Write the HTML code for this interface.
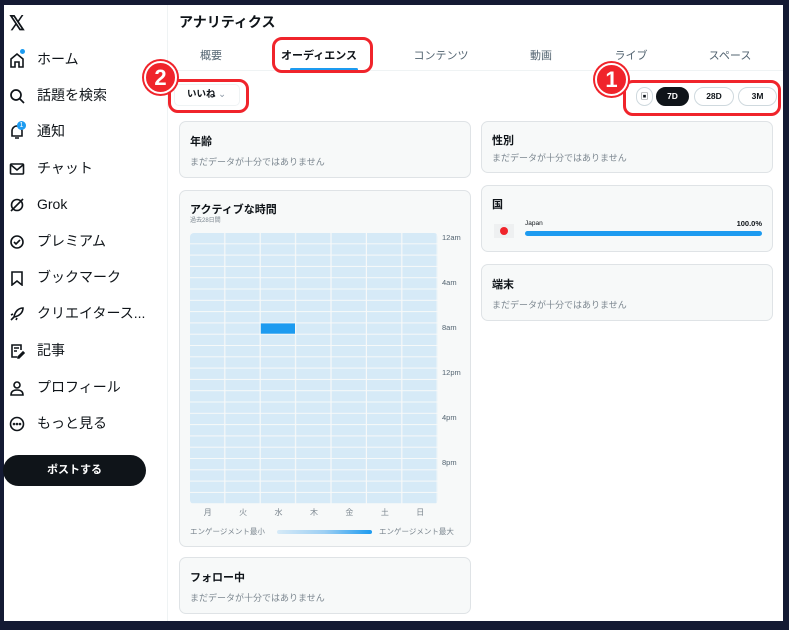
<!DOCTYPE html>
<html><head><meta charset="utf-8"><style>
*{box-sizing:border-box;margin:0;padding:0}
body{width:789px;height:630px;overflow:hidden;background:#141a33;font-family:"Liberation Sans","Noto Sans CJK JP",sans-serif;color:#0f1419;position:relative}
.panel{position:absolute;left:4px;top:5px;width:779px;height:616px;background:#fff}
.abs{position:absolute}
.side{position:absolute;left:0;top:0;width:164px;height:616px;border-right:1px solid #eff3f4}
.nav{position:absolute;left:33px;font-size:14px;line-height:20px;height:20px;color:#0f1419}
.ic{position:absolute;left:5px;width:16px;height:16px}
.tab{position:absolute;top:42px;font-size:11px;color:#536471;transform:translateX(-50%)}
.card{position:absolute;background:#f7f9f9;border:1px solid #dfe3e6;border-radius:7px}
.ct{position:absolute;left:10px;font-size:11px;font-weight:bold}
.cs{position:absolute;left:10px;font-size:9px;color:#7b868f}
.red{position:absolute;border:3px solid #f0242b;border-radius:10px}
.circ{position:absolute;width:33px;height:33px;border-radius:50%;background:#f0242b;border:2px solid #fff;box-shadow:0 0 0 2px #f0242b;color:#fff;font-weight:bold;font-size:22px;text-align:center;line-height:29px}
.pill{position:absolute;top:82px;height:19px;border:1px solid #cfd9de;border-radius:10px;font-size:8.5px;font-weight:bold;text-align:center;line-height:17px}
</style></head><body>
<div class="panel">
<div class="side">
<div class="abs" style="left:5px;top:6px;font-size:20px;font-weight:bold">𝕏</div>
<svg class="ic" style="top:47px" viewBox="0 0 16 16" fill="none" stroke="#0f1419" stroke-width="1.6"><path d="M2 7L8 2l6 5v8h-4v-5H6v5H2z"/></svg><div class="abs" style="left:16px;top:44px;width:5px;height:5px;border-radius:50%;background:#1d9bf0"></div>
<div class="nav" style="top:44px">ホーム</div>
<svg class="ic" style="top:83px" viewBox="0 0 16 16" fill="none" stroke="#0f1419" stroke-width="1.7"><circle cx="7" cy="7" r="5"/><path d="M11 11l4 4"/></svg>
<div class="nav" style="top:80px">話題を検索</div>
<svg class="ic" style="top:119px" viewBox="0 0 16 16" fill="none" stroke="#0f1419" stroke-width="1.6"><path d="M3 12V7a5 5 0 0110 0v5H3zM6 14h4"/></svg><div class="abs" style="left:13px;top:116px;width:9px;height:9px;border-radius:50%;background:#1d9bf0;color:#fff;font-size:7px;text-align:center;line-height:9px">1</div>
<div class="nav" style="top:116px">通知</div>
<svg class="ic" style="top:156px" viewBox="0 0 16 16" fill="none" stroke="#0f1419" stroke-width="1.6"><rect x="1.5" y="3" width="13" height="10" rx="1"/><path d="M2 4l6 5 6-5"/></svg>
<div class="nav" style="top:153px">チャット</div>
<svg class="ic" style="top:192px" viewBox="0 0 16 16" fill="none" stroke="#0f1419" stroke-width="1.6"><circle cx="8" cy="8" r="5.5"/><path d="M2 14L14 2"/></svg>
<div class="nav" style="top:189px">Grok</div>
<svg class="ic" style="top:229px" viewBox="0 0 16 16" fill="none" stroke="#0f1419" stroke-width="1.6"><circle cx="8" cy="8" r="6"/><path d="M5 8l2 2 4-4"/></svg>
<div class="nav" style="top:226px">プレミアム</div>
<svg class="ic" style="top:265px" viewBox="0 0 16 16" fill="none" stroke="#0f1419" stroke-width="1.6"><path d="M3 2h10v13l-5-4-5 4z"/></svg>
<div class="nav" style="top:262px">ブックマーク</div>
<svg class="ic" style="top:301px" viewBox="0 0 16 16" fill="none" stroke="#0f1419" stroke-width="1.6"><path d="M5 11c1-6 5-9 9-9 0 4-3 8-9 9zM5 11l-3 3M4 8L2 9M8 12l-1 2"/></svg>
<div class="nav" style="top:298px">クリエイタース...</div>
<svg class="ic" style="top:338px" viewBox="0 0 16 16" fill="none" stroke="#0f1419" stroke-width="1.6"><path d="M12 7V2H3v12h5M5 5h5M5 8h3M9 14l5-5 1 1-5 5H9z"/></svg>
<div class="nav" style="top:335px">記事</div>
<svg class="ic" style="top:375px" viewBox="0 0 16 16" fill="none" stroke="#0f1419" stroke-width="1.6"><circle cx="8" cy="5" r="3"/><path d="M2 15c0-4 3-5 6-5s6 1 6 5z"/></svg>
<div class="nav" style="top:372px">プロフィール</div>
<svg class="ic" style="top:411px" viewBox="0 0 16 16" fill="none" stroke="#0f1419" stroke-width="1.6"><circle cx="8" cy="8" r="6.5"/><circle cx="5" cy="8" r=".5"/><circle cx="8" cy="8" r=".5"/><circle cx="11" cy="8" r=".5"/></svg>
<div class="nav" style="top:408px">もっと見る</div>
<div class="abs" style="left:-1px;top:450px;width:143px;height:31px;border-radius:16px;background:#0f1419;color:#fff;font-size:11px;font-weight:bold;text-align:center;line-height:31px">ポストする</div>
</div>
<div class="abs" style="left:175px;top:7px;font-size:14px;font-weight:bold">アナリティクス</div>
<div class="tab" style="left:207px">概要</div>
<div class="tab" style="left:315px;color:#0f1419;font-weight:bold">オーディエンス</div>
<div class="abs" style="left:286px;top:63px;width:68px;height:3px;background:#1d9bf0;border-radius:2px"></div>
<div class="tab" style="left:437px">コンテンツ</div>
<div class="tab" style="left:537px">動画</div>
<div class="tab" style="left:627px">ライブ</div>
<div class="tab" style="left:726px">スペース</div>
<div class="abs" style="left:165px;top:65px;width:614px;height:1px;background:#eff3f4"></div>
<div class="red" style="left:268px;top:32px;width:101px;height:36px"></div>
<div class="abs" style="left:170px;top:79px;width:66px;height:22px;border:1px solid #eff3f4;border-radius:5px;font-size:9.5px;font-weight:bold;line-height:20px;padding-left:12px">いいね <span style="color:#8b98a5;font-weight:normal">⌄</span></div>
<div class="red" style="left:164px;top:74px;width:81px;height:34px"></div>
<div class="circ" style="left:140px;top:56px">2</div>
<div class="pill" style="left:632px;width:17px;font-weight:normal;font-size:8px">▣</div>
<div class="pill" style="left:652px;width:33px;background:#0f1419;border-color:#0f1419;color:#fff">7D</div>
<div class="pill" style="left:690px;width:40px">28D</div>
<div class="pill" style="left:734px;width:39px">3M</div>
<div class="red" style="left:619px;top:75px;width:158px;height:36px"></div>
<div class="circ" style="left:591px;top:58px">1</div>

<div class="card" style="left:175px;top:116px;width:292px;height:57px"><div class="ct" style="top:11px">年齢</div><div class="cs" style="top:33px">まだデータが十分ではありません</div></div>
<div class="card" style="left:175px;top:185px;width:292px;height:357px">
<div class="ct" style="top:10px">アクティブな時間</div>
<div class="abs" style="left:10px;top:24px;font-size:6px;color:#7b868f">過去28日間</div>
<svg class="abs" style="left:10px;top:42px" width="249" height="272">
<defs><pattern id="g" x="0" y="0" width="35.4" height="11.3" patternUnits="userSpaceOnUse"><rect x="0" y="0" width="34.2" height="10.3" fill="#d6eaf7"/></pattern></defs>
<rect x="0" y="0" width="248" height="271" fill="url(#g)" rx="4"/>
<rect x="70.8" y="90.4" width="34.2" height="10.3" fill="#1d9bf0"/>
</svg>
<div class="abs" style="left:262px;top:43px;font-size:7.5px;color:#536471;line-height:1">12am</div>
<div class="abs" style="left:262px;top:88px;font-size:7.5px;color:#536471;line-height:1">4am</div>
<div class="abs" style="left:262px;top:133px;font-size:7.5px;color:#536471;line-height:1">8am</div>
<div class="abs" style="left:262px;top:178px;font-size:7.5px;color:#536471;line-height:1">12pm</div>
<div class="abs" style="left:262px;top:223px;font-size:7.5px;color:#536471;line-height:1">4pm</div>
<div class="abs" style="left:262px;top:268px;font-size:7.5px;color:#536471;line-height:1">8pm</div>
<div class="abs" style="left:10px;top:316px;width:248px;display:flex;font-size:8px;color:#7b868f"><span style="flex:1;text-align:center">月</span><span style="flex:1;text-align:center">火</span><span style="flex:1;text-align:center">水</span><span style="flex:1;text-align:center">木</span><span style="flex:1;text-align:center">金</span><span style="flex:1;text-align:center">土</span><span style="flex:1;text-align:center">日</span></div>
<div class="abs" style="left:10px;top:335px;font-size:7.5px;color:#7b868f">エンゲージメント最小</div>
<div class="abs" style="left:97px;top:339px;width:95px;height:4px;border-radius:2px;background:linear-gradient(90deg,#d6eaf7,#9dcff3,#1d9bf0)"></div>
<div class="abs" style="left:199px;top:335px;font-size:7.5px;color:#7b868f">エンゲージメント最大</div>
</div>
<div class="card" style="left:175px;top:552px;width:292px;height:57px"><div class="ct" style="top:11px">フォロー中</div><div class="cs" style="top:33px">まだデータが十分ではありません</div></div>

<div class="card" style="left:477px;top:116px;width:292px;height:52px"><div class="ct" style="top:10px">性別</div><div class="cs" style="top:29px">まだデータが十分ではありません</div></div>
<div class="card" style="left:477px;top:180px;width:292px;height:67px"><div class="ct" style="top:10px">国</div>
<div class="abs" style="left:12px;top:38px;width:20px;height:14px;background:#eef0f1"></div><div class="abs" style="left:18px;top:41px;width:8px;height:8px;border-radius:50%;background:#f0242b"></div>
<div class="abs" style="left:43px;top:34px;font-size:6.5px">Japan</div><div class="abs" style="right:10px;top:33px;font-size:7.5px;font-weight:bold">100.0%</div>
<div class="abs" style="left:43px;top:45px;width:237px;height:5px;border-radius:3px;background:#1d9bf0"></div></div>
<div class="card" style="left:477px;top:259px;width:292px;height:57px"><div class="ct" style="top:11px">端末</div><div class="cs" style="top:33px">まだデータが十分ではありません</div></div>
</div>
</body></html>
